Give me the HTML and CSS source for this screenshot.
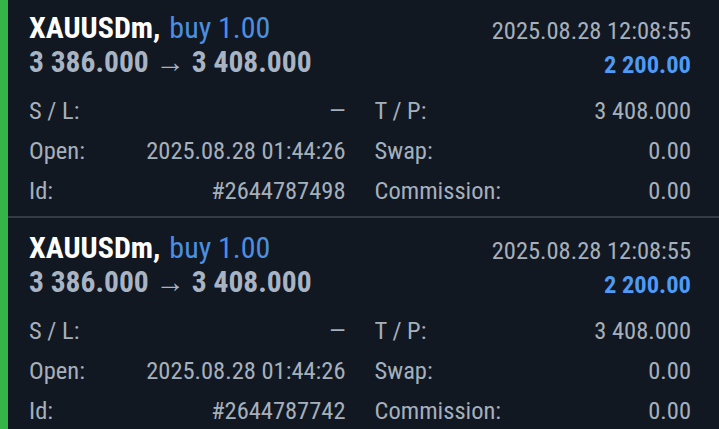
FILE: index.html
```html
<!DOCTYPE html>
<html lang="en">
<head>
    <meta charset="UTF-8" />
    <title>Positions</title>
    <link rel="stylesheet" href="styles.css">
</head>
<body>

<div class="list">
    <!-- one block per closed position -->
    <div class="deal">
        <div class="deal-head">
            <div class="deal-main">
                <div class="title">XAUUSDm, <span class="type">buy 1.00</span></div>
                <div class="prices">3 386.000 &rarr; 3 408.000</div>
            </div>
            <div class="deal-side">
                <div class="time">2025.08.28 12:08:55</div>
                <div class="profit">2 200.00</div>
            </div>
        </div>
        <div class="deal-info">
            <div class="field"><span>S / L:</span><span>&mdash;</span></div>
            <div class="field"><span>T / P:</span><span>3 408.000</span></div>
            <div class="field"><span>Open:</span><span>2025.08.28 01:44:26</span></div>
            <div class="field"><span>Swap:</span><span>0.00</span></div>
            <div class="field"><span>Id:</span><span>#2644787498</span></div>
            <div class="field"><span>Commission:</span><span>0.00</span></div>
        </div>
    </div>

    <div class="deal">
        <div class="deal-head">
            <div class="deal-main">
                <div class="title">XAUUSDm, <span class="type">buy 1.00</span></div>
                <div class="prices">3 386.000 &rarr; 3 408.000</div>
            </div>
            <div class="deal-side">
                <div class="time">2025.08.28 12:08:55</div>
                <div class="profit">2 200.00</div>
            </div>
        </div>
        <div class="deal-info">
            <div class="field"><span>S / L:</span><span>&mdash;</span></div>
            <div class="field"><span>T / P:</span><span>3 408.000</span></div>
            <div class="field"><span>Open:</span><span>2025.08.28 01:44:26</span></div>
            <div class="field"><span>Swap:</span><span>0.00</span></div>
            <div class="field"><span>Id:</span><span>#2644787742</span></div>
            <div class="field"><span>Commission:</span><span>0.00</span></div>
        </div>
    </div>
</div>

</body>
</html>
```

FILE: styles.css
```css
body {
    margin: 0;
    background: #121821;
    font-family: "Roboto Condensed", Roboto, sans-serif;
    font-stretch: 87.5%;
    color: #a5b0bd;
    height: 100vh;
    overflow: hidden;
}

.list {
    border-left: 8px solid #36b44a;
    min-height: 100vh;
    margin-top: -2px;
}

.deal {
    padding: 12px 28px 5px 21px;
    border-bottom: 2px solid #333a44;
}

.deal-head {
    display: flex;
    justify-content: space-between;
}

.title,
.prices {
    font-size: 30px;
    line-height: 35px;
    font-weight: bold;
    white-space: nowrap;
}

.title {
    color: #fff;
}

.title .type {
    color: #4b8fe2;
    font-weight: normal;
    margin-left: 2px;
    font-stretch: 93%;
}

.prices {
    color: #a8b4c3;
    font-size: 29.5px;
}

.deal-side {
    margin-top: 4px;
    text-align: right;
    line-height: 34px;
}

.time {
    font-size: 24.5px;
}

.profit {
    font-size: 24.5px;
    font-weight: bold;
    color: #4e9af4;
}

.deal-info {
    display: grid;
    grid-template-columns: 1fr 1fr;
    column-gap: 29px;
    margin-top: 9px;
    font-size: 24.5px;
    line-height: 40px;
}

.field {
    display: flex;
    justify-content: space-between;
    white-space: nowrap;
}
```
